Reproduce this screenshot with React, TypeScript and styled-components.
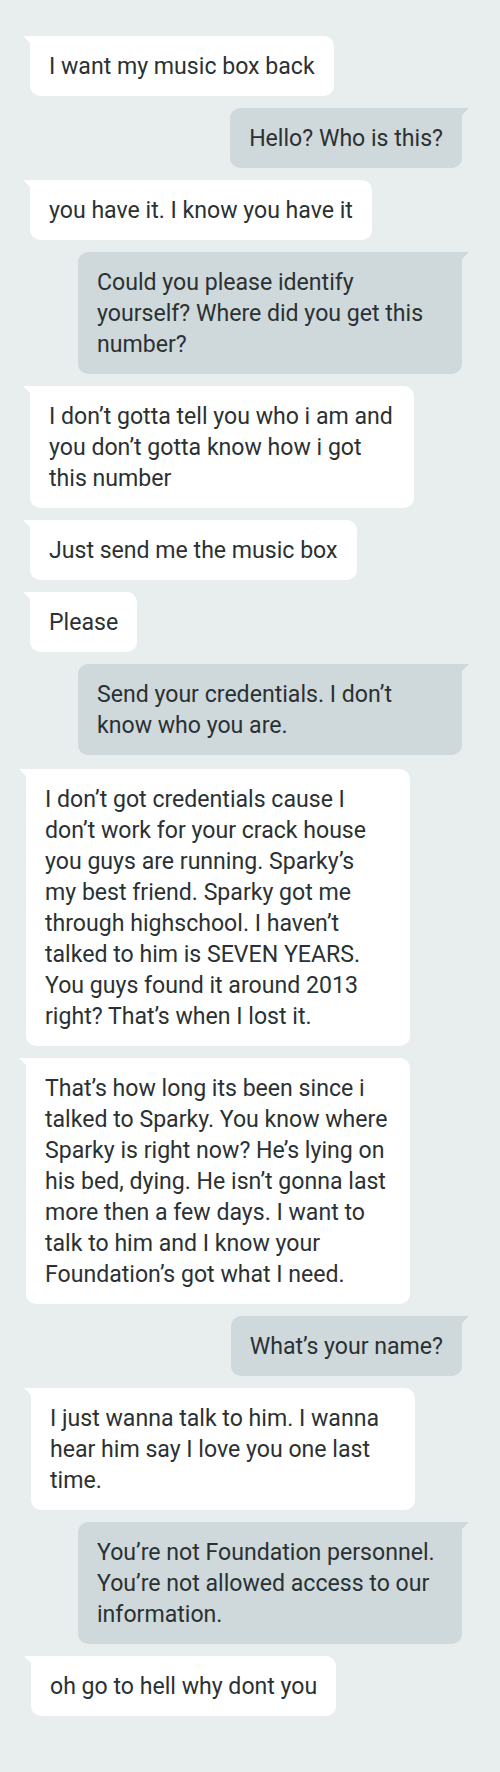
import React from "react";
import styled, { createGlobalStyle } from "styled-components";

const GlobalStyle = createGlobalStyle`
  html, body {
    margin: 0;
    padding: 0;
    background: #e8eded;
  }
  body {
    font-family: Roboto, "Noto Sans", "Liberation Sans", sans-serif;
  }
`;

const Thread = styled.div`
  width: 500px;
  min-height: 1772px;
  box-sizing: border-box;
  padding: 36px 0 0 0;
  display: flex;
  flex-direction: column;
  gap: 12px;
  background: #e8eded;
`;

const Row = styled.div<{ $out?: boolean; $push?: number; $left?: number }>`
  display: flex;
  justify-content: ${(p) => (p.$out ? "flex-end" : "flex-start")};
  padding-left: ${(p) => (p.$left ?? 30)}px;
  padding-right: 38px;
  margin-top: ${(p) => p.$push ?? 0}px;
`;

const Bubble = styled.div<{ $out?: boolean; $full?: boolean }>`
  position: relative;
  box-sizing: border-box;
  width: ${(p) => (p.$full ? "384px" : "auto")};
  padding: 14.5px 19px;
  background: ${(p) => (p.$out ? "#cfd8da" : "#ffffff")};
  color: #2b3133;
  font-size: 23.1px;
  line-height: 31px;
  border-radius: ${(p) => (p.$out ? "10px 0 10px 10px" : "0 10px 10px 10px")};

  &::before {
    content: "";
    position: absolute;
    top: 0;
    width: 0;
    height: 0;
    border-top: 7px solid ${(p) => (p.$out ? "#cfd8da" : "#ffffff")};
    ${(p) =>
      p.$out
        ? "right: -7px; border-right: 7px solid transparent;"
        : "left: -7px; border-left: 7px solid transparent;"}
  }
`;

const Line = styled.span`
  display: block;
  white-space: nowrap;
`;

type Msg = { out?: boolean; lines: string[]; push?: number; left?: number };

const messages: Msg[] = [
  { lines: ["I want my music box back"] },
  { out: true, lines: ["Hello? Who is this?"] },
  { lines: ["you have it. I know you have it"] },
  {
    out: true,
    lines: ["Could you please identify", "yourself? Where did you get this", "number?"],
  },
  {
    lines: ["I don\u2019t gotta tell you who i am and", "you don\u2019t gotta know how i got", "this number"],
  },
  { lines: ["Just send me the music box"] },
  { lines: ["Please"] },
  { out: true, lines: ["Send your credentials. I don\u2019t", "know who you are."] },
  {
    push: 2,
    left: 26,
    lines: [
      "I don\u2019t got credentials cause I",
      "don\u2019t work for your crack house",
      "you guys are running. Sparky\u2019s",
      "my best friend. Sparky got me",
      "through highschool. I haven\u2019t",
      "talked to him is SEVEN YEARS.",
      "You guys found it around 2013",
      "right? That\u2019s when I lost it.",
    ],
  },
  {
    left: 26,
    lines: [
      "That\u2019s how long its been since i",
      "talked to Sparky. You know where",
      "Sparky is right now? He\u2019s lying on",
      "his bed, dying. He isn\u2019t gonna last",
      "more then a few days. I want to",
      "talk to him and I know your",
      "Foundation\u2019s got what I need.",
    ],
  },
  { out: true, lines: ["What\u2019s your name?"] },
  {
    left: 31,
    lines: ["I just wanna talk to him. I wanna", "hear him say I love you one last", "time."],
  },
  {
    out: true,
    lines: ["You\u2019re not Foundation personnel.", "You\u2019re not allowed access to our", "information."],
  },
  { left: 31, lines: ["oh go to hell why dont you"] },
];

export default function App() {
  return (
    <>
      <GlobalStyle />
      <Thread>
        {messages.map((m, i) => (
          <Row key={i} $out={m.out} $push={m.push} $left={m.left}>
            <Bubble $out={m.out} $full={m.lines.length > 1}>
              {m.lines.map((l, j) => (
                <Line key={j}>{l}</Line>
              ))}
            </Bubble>
          </Row>
        ))}
      </Thread>
    </>
  );
}
